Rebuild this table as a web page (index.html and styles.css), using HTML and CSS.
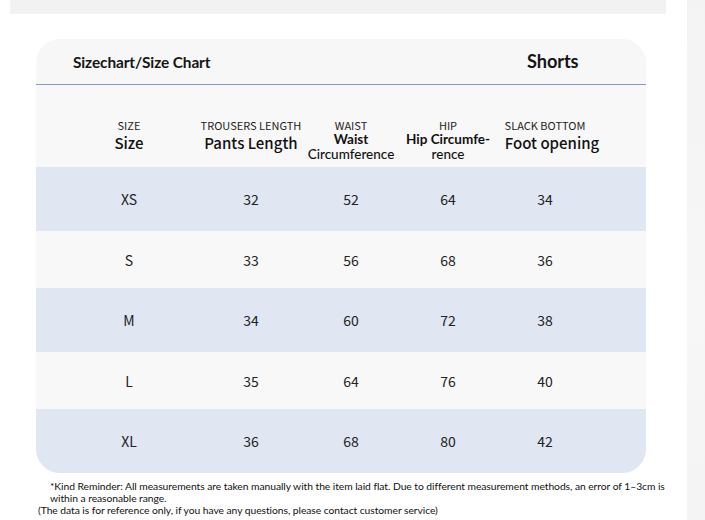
FILE: index.html
```html
<!DOCTYPE html>
<html lang="en">
<head>
<meta charset="utf-8">
<title>Size Chart</title>
<link rel="stylesheet" href="styles.css">
</head>
<body>
<div class="page">
  <main class="main">
    <div class="topbar"></div>
    <section class="card">
      <header class="card-head">
        <h1 class="title">Sizechart/Size Chart</h1>
        <h2 class="type">Shorts</h2>
      </header>
      <div class="table">
        <div class="row head">
          <div class="cell"><span class="en">SIZE</span><span class="main-label">Size</span></div>
          <div class="cell"><span class="en">TROUSERS LENGTH</span><span class="main-label">Pants Length</span></div>
          <div class="cell"><span class="en">WAIST</span><span class="two"><b>Waist</b><span>Circumference</span></span></div>
          <div class="cell"><span class="en">HIP</span><span class="two"><b>Hip Circumfe-</b><span>rence</span></span></div>
          <div class="cell foot"><span class="en">SLACK BOTTOM</span><span class="main-label shift">Foot opening</span></div>
        </div>
        <div class="row data blue tall"><div class="cell">XS</div><div class="cell">32</div><div class="cell">52</div><div class="cell">64</div><div class="cell">34</div></div>
        <div class="row data"><div class="cell">S</div><div class="cell">33</div><div class="cell">56</div><div class="cell">68</div><div class="cell">36</div></div>
        <div class="row data blue tall"><div class="cell">M</div><div class="cell">34</div><div class="cell">60</div><div class="cell">72</div><div class="cell">38</div></div>
        <div class="row data"><div class="cell">L</div><div class="cell">35</div><div class="cell">64</div><div class="cell">76</div><div class="cell">40</div></div>
        <div class="row data blue tall"><div class="cell">XL</div><div class="cell">36</div><div class="cell">68</div><div class="cell">80</div><div class="cell">42</div></div>
      </div>
    </section>
    <div class="notes">
      <p class="note">*Kind Reminder: All measurements are taken manually with the item laid flat. Due to different measurement methods, an error of 1–3cm is within a reasonable range.</p>
      <p class="note2">(The data is for reference only, if you have any questions, please contact customer service)</p>
    </div>
  </main>
  <aside class="side"></aside>
</div>
</body>
</html>
```

FILE: styles.css
```css
* { box-sizing: border-box; }
html, body { margin: 0; padding: 0; background: #fff; }
body {
  width: 705px;
  height: 520px;
  overflow: hidden;
  font-family: "Noto Sans CJK SC", "Noto Sans", sans-serif;
  color: #151515;
}
.page { display: flex; height: 520px; }
.main { width: 687px; display: flex; flex-direction: column; }
.side {
  width: 18px;
  background: linear-gradient(to bottom, #f3f3f3, #f7f7f7 60%, #f4f4f4);
}
.topbar {
  margin-left: 10px;
  width: 656px;
  height: 14px;
  background: #f2f2f2;
}
.card {
  margin: 25px 0 0 36px;
  width: 610px;
  height: 434px;
  border-radius: 24px;
  overflow: hidden;
  background: #f8f8f8;
  display: flex;
  flex-direction: column;
}
.card-head {
  height: 46px;
  border-bottom: 1px solid #7f9bd0;
  display: flex;
  align-items: center;
  padding: 0 0 0 37px;
  background: #f7f7f7;
}
.title {
  margin: 0;
  font-family: Lato, "Liberation Sans", sans-serif;
  font-weight: 700;
  font-size: 15.4px;
  letter-spacing: -0.1px;
  width: 454px;
}
.type {
  margin: 0;
  font-family: Lato, "Liberation Sans", sans-serif;
  font-weight: 700;
  font-size: 18.2px;
  letter-spacing: -0.1px;
  padding-bottom: 2px;
}
.table { display: flex; flex-direction: column; }
.row {
  display: grid;
  grid-template-columns: 122px 122px 78px 116px 78px;
  padding-left: 32px;
}
.cell {
  display: flex;
  flex-direction: column;
  align-items: center;
  white-space: nowrap;
}
.head { height: 82px; }
.head .cell { padding-top: 34px; }
.en {
  font-size: 11px;
  line-height: 12px;
  color: #222;
}
.main-label {
  font-size: 15px;
  line-height: 22px;
  margin-top: 1px;
  font-weight: 500;
  color: #111;
}
.shift { margin-left: 14px; }
.two {
  display: flex;
  flex-direction: column;
  align-items: center;
  margin-top: 1px;
  font-family: Lato, "Liberation Sans", sans-serif;
  font-size: 13.5px;
  line-height: 14.5px;
  color: #111;
}
.two b { font-weight: 700; }
.two span { font-weight: 500; }
.data { height: 57px; align-items: center; font-size: 14px; color: #222; }
.data .cell { justify-content: center; }
.data.tall { height: 64px; }
.blue { background: #e1e6f3; }
.notes {
  font-family: Lato, "Liberation Sans", sans-serif;
  color: #111;
  padding-top: 7px;
}
.note {
  margin: 0 0 0 50px;
  width: 624px;
  font-size: 10.3px;
  line-height: 12px;
  letter-spacing: -0.05px;
}
.note2 {
  margin: 0 0 0 38px;
  font-size: 10.3px;
  line-height: 12px;
  letter-spacing: -0.05px;
}
```
